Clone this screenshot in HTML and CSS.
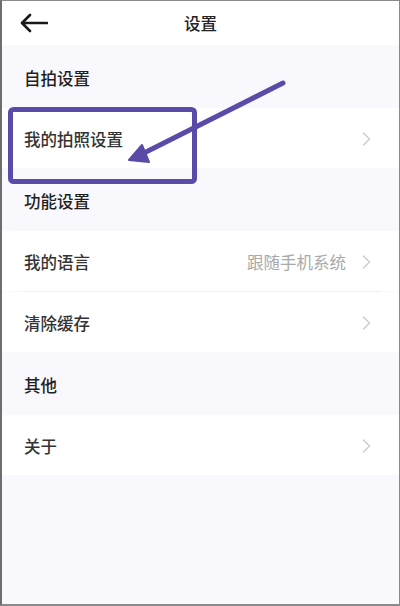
FILE: index.html
```html
<!DOCTYPE html>
<html lang="zh-CN">
<head>
<meta charset="utf-8">
<title>设置</title>
<link rel="stylesheet" href="styles.css">
</head>
<body>
<div class="screen">
  <header class="topbar">
    <span class="back">
      <svg width="28" height="20" viewBox="0 0 28 20"><path d="M27 10H3M10 2L2 10L10 18" fill="none" stroke="#1a1a1a" stroke-width="2.6" stroke-linecap="round" stroke-linejoin="round"/></svg>
    </span>
    <h1 class="title">设置</h1>
  </header>

  <div class="section-title">自拍设置</div>
  <div class="row">
    <span class="label">我的拍照设置</span>
    <span class="right"><svg class="chev" width="10" height="16" viewBox="0 0 10 16"><path d="M2 1.5L8.5 8L2 14.5" fill="none" stroke="#cfcfcf" stroke-width="1.6"/></svg></span>
  </div>

  <div class="section-title">功能设置</div>
  <div class="row">
    <span class="label">我的语言</span>
    <span class="right"><span class="value">跟随手机系统</span><svg class="chev" width="10" height="16" viewBox="0 0 10 16"><path d="M2 1.5L8.5 8L2 14.5" fill="none" stroke="#cfcfcf" stroke-width="1.6"/></svg></span>
  </div>
  <div class="divider"></div>
  <div class="row">
    <span class="label">清除缓存</span>
    <span class="right"><svg class="chev" width="10" height="16" viewBox="0 0 10 16"><path d="M2 1.5L8.5 8L2 14.5" fill="none" stroke="#cfcfcf" stroke-width="1.6"/></svg></span>
  </div>

  <div class="section-title">其他</div>
  <div class="row">
    <span class="label">关于</span>
    <span class="right"><svg class="chev" width="10" height="16" viewBox="0 0 10 16"><path d="M2 1.5L8.5 8L2 14.5" fill="none" stroke="#cfcfcf" stroke-width="1.6"/></svg></span>
  </div>

  <svg class="annotation" width="400" height="606" viewBox="0 0 400 606">
    <rect x="10.5" y="109.5" width="184" height="72" rx="3" fill="none" stroke="#5b4aa8" stroke-width="5"/>
    <line x1="283" y1="83" x2="144" y2="153" stroke="#5b4aa8" stroke-width="5" stroke-linecap="round"/>
    <polygon points="129,160 142,145 149,162" fill="#5b4aa8" stroke="#5b4aa8" stroke-width="2" stroke-linejoin="round"/>
  </svg>
</div>
</body>
</html>
```

FILE: styles.css
```css
html, body {
  margin: 0;
  padding: 0;
  background: #ffffff;
}

.screen {
  position: relative;
  width: 400px;
  height: 606px;
  box-sizing: border-box;
  border: 1px solid #8a8a8a;
  border-left: 2px solid #6e6e6e;
  border-bottom: 2px solid #8a8a8a;
  background: #f9f8fd;
  overflow: hidden;
  font-family: "Noto Sans CJK SC", "Noto Sans", sans-serif;
  color: #2a2a2a;
}

.topbar {
  position: relative;
  height: 44px;
  background: #ffffff;
  display: flex;
  align-items: center;
  justify-content: center;
}

.back {
  position: absolute;
  left: 18px;
  top: 12px;
  display: flex;
}

.title {
  margin: 0;
  font-size: 16.5px;
  font-weight: 500;
  color: #222;
}

.section-title {
  height: 63px;
  display: flex;
  align-items: center;
  padding-left: 22px;
  padding-top: 2px;
  box-sizing: border-box;
  font-size: 16.5px;
  font-weight: 500;
  color: #1f1f1f;
}

.row {
  height: 60px;
  background: #ffffff;
  display: flex;
  align-items: center;
  justify-content: space-between;
  padding: 2px 28px 0 22px;
  box-sizing: border-box;
  font-size: 16.5px;
}

.label {
  font-weight: 500;
  color: #333;
}

.right {
  display: flex;
  align-items: center;
  gap: 15px;
}

.value {
  color: #a9a9a9;
  font-size: 16.5px;
}

.chev {
  display: block;
}

.divider {
  height: 1px;
  background: #ffffff;
  padding: 0 19px 0 21px;
  background-clip: content-box;
  background-color: #eeeeee;
}

.annotation {
  position: absolute;
  left: -2px;
  top: -1px;
  pointer-events: none;
}
```
